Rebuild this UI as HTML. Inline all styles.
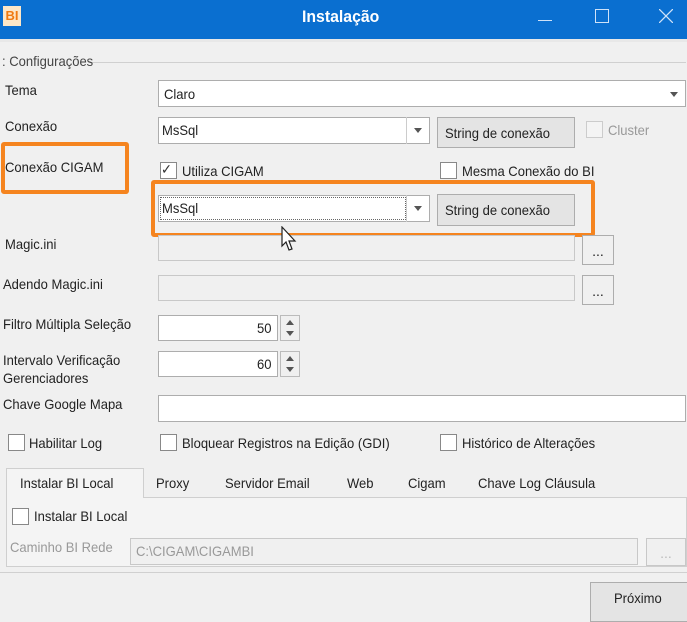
<!DOCTYPE html>
<html><head><meta charset="utf-8"><style>
*{box-sizing:border-box;margin:0;padding:0}
body{width:687px;height:615px;overflow:hidden;background:#f0f0f0;font-family:"Liberation Sans",sans-serif;font-size:14px;color:#222;position:relative}
.a{position:absolute}
.t{position:absolute;white-space:nowrap;transform:scaleX(.93);transform-origin:left}
.box{position:absolute;background:#fff;border:1px solid #adadad}
.dis{position:absolute;background:#f0f0f0;border:1px solid #c8c8c8}
.btn{position:absolute;background:#e4e4e4;border:1px solid #adadad;text-align:center}
.cb{position:absolute;width:17px;height:17px;background:#fff;border:1px solid #888}
.arr{position:absolute;width:0;height:0;border-left:4px solid transparent;border-right:4px solid transparent;border-top:5px solid #555}
.org{position:absolute;border:4px solid #f5841f;border-radius:3px}
</style></head><body>
<div class="a" style="left:0;top:0;width:687px;height:39px;background:#0a6fd0"></div>
<div class="a" style="left:0;top:39px;width:687px;height:3px;background:#e8e8e8"></div>
<div class="a" style="left:3px;top:6px;width:18px;height:20px;background:#fde7c8;color:#f07a10;font-weight:bold;font-size:13px;line-height:20px;text-align:center">BI</div>
<div class="t" style="left:302px;top:7px;color:#fff;font-weight:bold;font-size:17px">Instalação</div>
<div class="a" style="left:538px;top:20px;width:14px;height:1px;background:#cfe2f8"></div>
<div class="a" style="left:595px;top:9px;width:14px;height:14px;border:1px solid #cfe2f8"></div>
<svg class="a" style="left:659px;top:9px" width="14" height="14"><path d="M0 0L14 14M14 0L0 14" stroke="#cfe2f8" stroke-width="1.3"/></svg>

<div class="a" style="left:88px;top:62px;width:598px;height:1px;background:#d0d0d0"></div>
<div class="t" style="left:2px;top:53px;color:#444">: Configurações</div>

<div class="t" style="left:5px;top:82px">Tema</div>
<div class="box" style="left:158px;top:80px;width:528px;height:27px"></div>
<div class="t" style="left:164px;top:86px">Claro</div>
<div class="arr" style="left:670px;top:92px"></div>

<div class="t" style="left:5px;top:118px">Conexão</div>
<div class="box" style="left:158px;top:117px;width:272px;height:27px"></div>
<div class="a" style="left:406px;top:117px;width:1px;height:27px;background:#ccc"></div>
<div class="t" style="left:162px;top:122px">MsSql</div>
<div class="arr" style="left:414px;top:128px"></div>
<div class="btn" style="left:437px;top:117px;width:138px;height:31px"></div>
<div class="t" style="left:445px;top:125px">String de conexão</div>
<div class="cb" style="left:586px;top:121px;border-color:#ccc;background:#f4f4f4"></div>
<div class="t" style="left:608px;top:122px;color:#999">Cluster</div>

<div class="org" style="left:1px;top:142px;width:128px;height:52px"></div>
<div class="t" style="left:5px;top:159px">Conexão CIGAM</div>
<div class="cb" style="left:160px;top:162px"></div>
<div class="t" style="left:161px;top:161px;font-size:14px;color:#333">✓</div>
<div class="t" style="left:182px;top:163px">Utiliza CIGAM</div>
<div class="cb" style="left:440px;top:162px"></div>
<div class="t" style="left:462px;top:163px">Mesma Conexão do BI</div>

<div class="org" style="left:151px;top:180px;width:444px;height:57px"></div>
<div class="box" style="left:158px;top:195px;width:272px;height:27px"></div>
<div class="a" style="left:160px;top:197px;width:246px;height:23px;border:1px dotted #666"></div>
<div class="a" style="left:406px;top:195px;width:1px;height:27px;background:#ccc"></div>
<div class="t" style="left:162px;top:200px">MsSql</div>
<div class="arr" style="left:414px;top:206px"></div>
<div class="btn" style="left:437px;top:194px;width:138px;height:32px"></div>
<div class="t" style="left:445px;top:202px">String de conexão</div>

<div class="t" style="left:5px;top:236px">Magic.ini</div>
<div class="dis" style="left:158px;top:235px;width:417px;height:26px"></div>
<div class="btn" style="left:582px;top:235px;width:32px;height:30px;background:#f0f0f0;line-height:30px">...</div>

<div class="t" style="left:3px;top:276px">Adendo Magic.ini</div>
<div class="dis" style="left:158px;top:275px;width:417px;height:26px"></div>
<div class="btn" style="left:582px;top:275px;width:32px;height:30px;background:#f0f0f0;line-height:30px">...</div>

<div class="t" style="left:3px;top:316px">Filtro Múltipla Seleção</div>
<div class="box" style="left:158px;top:315px;width:120px;height:26px"></div>
<div class="t" style="left:257px;top:320px">50</div>
<div class="a" style="left:280px;top:315px;width:20px;height:26px;border:1px solid #bbb;background:#f0f0f0"></div>
<div class="a" style="left:286px;top:320px;border-left:4px solid transparent;border-right:4px solid transparent;border-bottom:5px solid #555"></div>
<div class="a" style="left:286px;top:331px;border-left:4px solid transparent;border-right:4px solid transparent;border-top:5px solid #555"></div>

<div class="t" style="left:3px;top:352px">Intervalo Verificação</div>
<div class="t" style="left:3px;top:370px">Gerenciadores</div>
<div class="box" style="left:158px;top:351px;width:120px;height:26px"></div>
<div class="t" style="left:257px;top:356px">60</div>
<div class="a" style="left:280px;top:351px;width:20px;height:26px;border:1px solid #bbb;background:#f0f0f0"></div>
<div class="a" style="left:286px;top:356px;border-left:4px solid transparent;border-right:4px solid transparent;border-bottom:5px solid #555"></div>
<div class="a" style="left:286px;top:367px;border-left:4px solid transparent;border-right:4px solid transparent;border-top:5px solid #555"></div>

<div class="t" style="left:3px;top:396px">Chave Google Mapa</div>
<div class="box" style="left:158px;top:395px;width:528px;height:27px"></div>

<div class="cb" style="left:8px;top:434px"></div>
<div class="t" style="left:29px;top:435px">Habilitar Log</div>
<div class="cb" style="left:160px;top:434px"></div>
<div class="t" style="left:182px;top:435px">Bloquear Registros na Edição (GDI)</div>
<div class="cb" style="left:440px;top:434px"></div>
<div class="t" style="left:462px;top:435px">Histórico de Alterações</div>

<div class="a" style="left:6px;top:497px;width:681px;height:70px;border:1px solid #cfcfcf;background:#f4f4f4"></div>
<div class="a" style="left:6px;top:468px;width:138px;height:30px;border:1px solid #cfcfcf;border-bottom:none;background:#f4f4f4"></div>
<div class="t" style="left:20px;top:475px">Instalar BI Local</div>
<div class="t" style="left:156px;top:475px">Proxy</div>
<div class="t" style="left:225px;top:475px">Servidor Email</div>
<div class="t" style="left:347px;top:475px">Web</div>
<div class="t" style="left:408px;top:475px">Cigam</div>
<div class="t" style="left:478px;top:475px">Chave Log Cláusula</div>
<div class="cb" style="left:12px;top:508px"></div>
<div class="t" style="left:34px;top:508px">Instalar BI Local</div>
<div class="t" style="left:10px;top:539px;color:#999">Caminho BI Rede</div>
<div class="dis" style="left:130px;top:538px;width:508px;height:27px"></div>
<div class="t" style="left:136px;top:543px;color:#999">C:\CIGAM\CIGAMBI</div>
<div class="dis" style="left:646px;top:538px;width:40px;height:28px;text-align:center;color:#bbb;line-height:28px">...</div>

<div class="a" style="left:0;top:572px;width:687px;height:1px;background:#d0d0d0"></div>
<div class="btn" style="left:590px;top:582px;width:100px;height:40px"></div>
<div class="t" style="left:614px;top:590px">Próximo</div>
<svg class="a" style="left:281px;top:226px" width="20" height="30"><path d="M1 1L1 20L5 16L8 24L11 23L8 15L14 15Z" fill="#fff" stroke="#222" stroke-width="1.2"/></svg>
</body></html>
